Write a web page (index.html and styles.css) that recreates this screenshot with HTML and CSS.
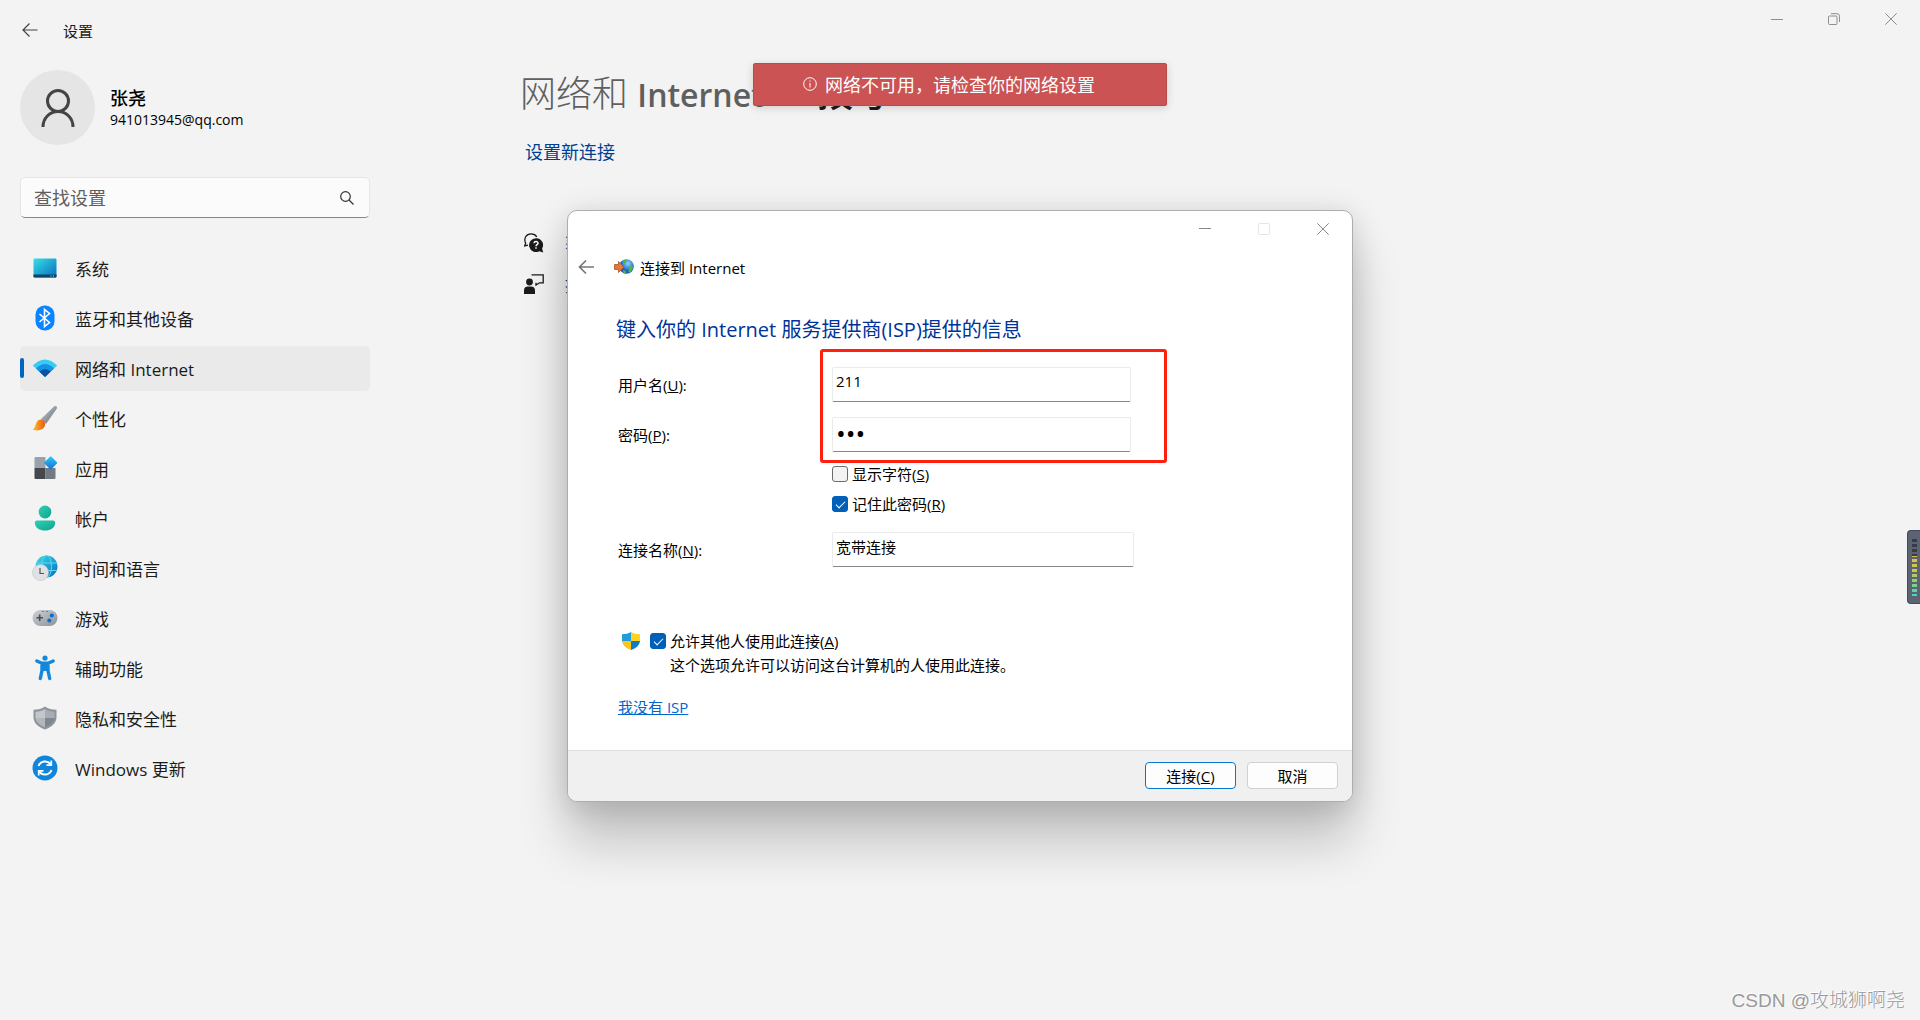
FILE: index.html
```
<!DOCTYPE html>
<html lang="zh-CN">
  <head>
    <meta charset="UTF-8" />
    <meta name="viewport" content="width=device-width, initial-scale=1.0" />
    <title>设置</title>
    <link rel="stylesheet" href="styles.css">
  </head>
  <body>
    <header class="topbar">
      <button class="icon-btn back" aria-label="返回">
        <svg width="16" height="16" viewBox="0 0 16 16" fill="none" stroke="#444" stroke-width="1.2"><path d="M15.5 8H1M7.500 1.500L1 8l6.500 6.500"/></svg>
      </button>
      <span class="app-name">设置</span>
      <div class="window-btns">
        <button class="icon-btn" aria-label="最小化">
          <svg width="12" height="12" viewBox="0 0 12 12" stroke="#8e8e8e"><path d="M0 6.500h12"/></svg>
        </button>
        <button class="icon-btn" aria-label="还原">
          <svg width="12" height="12" viewBox="0 0 12 12" fill="none" stroke="#8e8e8e"><rect x=".5" y="3" width="8.500" height="8.500" rx="1"/><path d="M3 .7h6a2.500 2.500 0 0 1 2.500 2.500V9"/></svg>
        </button>
        <button class="icon-btn" aria-label="关闭">
          <svg width="12" height="12" viewBox="0 0 12 12" stroke="#8e8e8e"><path d="M.3.3l11.400 11.400M11.700.3L.3 11.700"/></svg>
        </button>
      </div>
    </header>

    <div class="layout">
      <aside class="sidebar">
        <div class="profile">
          <div class="avatar">
            <svg width="36" height="40" viewBox="0 0 36 40" fill="none" stroke="#444" stroke-width="3"><circle cx="18" cy="13" r="10.500"/><path d="M3 39c0-8.500 6.500-15.500 15-15.500S33 30.500 33 39"/></svg>
          </div>
          <div>
            <div class="user-name">张尧</div>
            <div class="user-mail">941013945@qq.com</div>
          </div>
        </div>

        <div class="search">
          <input type="text" placeholder="查找设置" aria-label="查找设置" />
          <svg width="14" height="14" viewBox="0 0 14 14" fill="none" stroke="#333" stroke-width="1.200"><circle cx="5.500" cy="5.500" r="4.800"/><path d="M9 9l4.500 4.500"/></svg>
        </div>

        <nav class="menu">
          <a href="#">
            <svg width="26" height="26" viewBox="0 0 26 26">
              <defs><linearGradient id="sys" x2="1" y2="1"><stop stop-color="#36dfe6"/><stop offset="1" stop-color="#0a6cc0"/></linearGradient></defs>
              <rect x="1.500" y="3.500" width="23" height="19" rx="1.200" fill="url(#sys)"/><path d="M1.500 19.500h23v2a1 1 0 0 1-1 1h-21a1 1 0 0 1-1-1z" fill="#0b4468"/><path d="M18.500 21h1M21 21h1" stroke="#cde"/>
            </svg>
            系统
          </a>
          <a href="#">
            <svg width="26" height="26" viewBox="0 0 26 26"><rect x="3.500" y=".5" width="19" height="25" rx="9" fill="#0a84ff"/><path d="M7.500 9l10 8.500-5 4v-17l5 4-10 8.500" fill="none" stroke="#fff" stroke-width="1.600"/></svg>
            蓝牙和其他设备
          </a>
          <a href="#" class="active">
            <svg width="26" height="26" viewBox="0 0 26 26"><path d="M.8 10.500Q13-1.500 25.200 10.500L13 22z" fill="#38cbf5"/><path d="M4 13.500Q13 4.500 22 13.500L13 22z" fill="#1593e2"/><path d="M7.300 16.600Q13 11.500 18.700 16.600L13 22z" fill="#0a52a0"/></svg>
            网络和 Internet
          </a>
          <a href="#">
            <svg width="26" height="26" viewBox="0 0 26 26">
              <defs><linearGradient id="han" x2="1" y2="1"><stop stop-color="#c3c9cf"/><stop offset="1" stop-color="#646c76"/></linearGradient><linearGradient id="tip" x2="1"><stop stop-color="#fdc31b"/><stop offset="1" stop-color="#e8591d"/></linearGradient></defs>
              <path d="M9 14L22 1.500c1.500-1.300 3.800.3 2.700 2.300L14 19z" fill="url(#han)"/><path d="M4.500 17.500c1.700-3.600 5.500-3.800 7.500-1.500 2 2.200 1.300 6.500-2 8.300-3 1.600-7 1.300-9.300.2 2.300-1.300 2.500-4 3.800-7z" fill="url(#tip)"/>
            </svg>
            个性化
          </a>
          <a href="#">
            <svg width="26" height="26" viewBox="0 0 26 26">
              <defs><linearGradient id="app" x2="1" y2="1"><stop stop-color="#37c8f5"/><stop offset="1" stop-color="#0f6fd6"/></linearGradient></defs>
              <path d="M3.500 2H13.500v11H2.500V3a1 1 0 0 1 1-1z" fill="#9aa2ab"/><path d="M2.500 13h11v11h-10a1 1 0 0 1-1-1z" fill="#44474b"/><path d="M13.500 13h10v10a1 1 0 0 1-1 1h-9z" fill="#727983"/><rect x="13.800" y="3" width="9.800" height="9.800" rx="1" fill="url(#app)" transform="rotate(45 18.700 7.900)"/>
            </svg>
            应用
          </a>
          <a href="#">
            <svg width="26" height="26" viewBox="0 0 26 26">
              <defs><linearGradient id="acc" x2="1" y2="1"><stop stop-color="#2bd3b6"/><stop offset="1" stop-color="#12a18d"/></linearGradient></defs>
              <circle cx="13" cy="7" r="6.400" fill="url(#acc)"/><path d="M5 15.500h16a2.200 2.200 0 0 1 2.200 2.200c0 5-5 7.800-10.200 7.800S2.800 22.700 2.800 17.700A2.200 2.200 0 0 1 5 15.500z" fill="url(#acc)"/>
            </svg>
            帐户
          </a>
          <a href="#">
            <svg width="26" height="26" viewBox="0 0 26 26">
              <circle cx="14.500" cy="11.500" r="11" fill="url(#sys)"/><g fill="none" stroke="#5fd8ee" stroke-width="1"><ellipse cx="14.500" cy="11.500" rx="5" ry="11"/><path d="M4 8h21M4 15.500h21"/></g><circle cx="8.500" cy="17.500" r="8" fill="#dfe1e4" stroke="#c0c4c8" stroke-width=".6"/><path d="M8 13v5.500h4" fill="none" stroke="#555" stroke-width="1.200"/>
            </svg>
            时间和语言
          </a>
          <a href="#">
            <svg width="26" height="26" viewBox="0 0 26 26">
              <defs><linearGradient id="pad" x2="1" y2="1"><stop stop-color="#ced3d7"/><stop offset="1" stop-color="#8a9199"/></linearGradient></defs>
              <rect x=".5" y="5" width="25" height="16" rx="8" fill="url(#pad)"/><path d="M4.500 12.800h6.500M7.700 9.500v6.500" stroke="#4a4e53" stroke-width="1.600"/><circle cx="19.800" cy="10.500" r="2" fill="#0d6ccd"/><circle cx="17.300" cy="15.500" r="2" fill="#0d6ccd"/><path d="M10.500 6.500h1M14.500 6.500h1" stroke="#444"/>
            </svg>
            游戏
          </a>
          <a href="#">
            <svg width="26" height="26" viewBox="0 0 26 26" stroke="#1188dc" stroke-linecap="round" stroke-linejoin="round"><circle cx="13" cy="3" r="2.600" fill="#1188dc" stroke="none"/><path d="M4.800 6l5.200 2.300h6L21.200 6M10 9v6.500L8.300 23.500M16 9v6.500l1.700 8" fill="none" stroke-width="3.400"/><path d="M11 9h4v6h-4z" fill="#1188dc" stroke-width="2"/></svg>
            辅助功能
          </a>
          <a href="#">
            <svg width="26" height="26" viewBox="0 0 26 26">
              <path d="M13 1.500c3 2.200 7 3.200 11.500 3.200V12c0 6-4.500 9.800-11.500 12.500C6 21.800 1.500 18 1.500 12V4.700C6 4.700 10 3.700 13 1.500z" fill="#8e949b"/><path d="M13 4c-2.500 1.800-6 2.700-9.500 2.900V13H13z" fill="#c3c7cb"/><path d="M13 4c2.500 1.800 6 2.700 9.500 2.900V13H13z" fill="#a8adb3"/><path d="M3.500 13H13v9.300C7.500 20 4 17 3.500 13z" fill="#b2b7bc"/><path d="M22.500 13H13v9.300c5.500-2.300 9-5.300 9.500-9.300z" fill="#80868e"/>
            </svg>
            隐私和安全性
          </a>
          <a href="#">
            <svg width="26" height="26" viewBox="0 0 26 26"><circle cx="13" cy="13" r="12.500" fill="#0f86dc"/><g fill="none" stroke="#fff" stroke-width="2"><path d="M6.500 11A7 7 0 0 1 18.500 9M19.500 15A7 7 0 0 1 7.500 17"/><path d="M19.300 5.500v4.700h-4.800M6.700 20.500v-4.700h4.800" stroke-width="1.700"/></g></svg>
            Windows 更新
          </a>
        </nav>
      </aside>

      <main class="content">
        <h1 class="crumbs"><span class="crumb-parent">网络和 <b>Internet</b></span><span class="crumb-sep">›</span><span class="crumb-current">拨号</span></h1>
        <a href="#" class="new-link">设置新连接</a>
        <div class="help-row">
          <svg width="20" height="20" viewBox="0 0 20 20" fill="none" stroke="#1b1b1b"><path d="M1.800 10.500C-.8 5.500 2.300.8 7 .8c2.600 0 4.600 1.100 5.800 3M1.800 10L.6 13l3.400-.8" stroke-width="1.300"/><path d="M12 5.200a6.900 6.900 0 1 0 3.200 13l4 1.300-1.100-3.900A6.900 6.900 0 0 0 12 5.200z" fill="#1b1b1b" stroke="none"/><path d="M10 10.200c.2-2.400 4.200-2.200 4 .2-.1 1.300-2 1.300-2 2.800M12 14.300v1.500" stroke="#fff" stroke-width="1.400"/></svg>
          <a href="#">获取帮助</a>
        </div>
        <div class="help-row">
          <svg width="20" height="20" viewBox="0 0 20 20"><path d="M7.500.8h11.700v8h-3.700L12 11V8.800" fill="none" stroke="#1b1b1b" stroke-width="1.300"/><circle cx="5.500" cy="8" r="3.400" fill="#1b1b1b"/><path d="M0 20v-3.500A4 4 0 0 1 4 12.500h3a4 4 0 0 1 4 4V20z" fill="#1b1b1b"/></svg>
          <a href="#">提供反馈</a>
        </div>
      </main>
    </div>

    <div class="toast" role="alert">
      <svg width="14" height="14" viewBox="0 0 14 14" fill="none" stroke="#fff" stroke-width="1"><circle cx="7" cy="7" r="6.300"/><path d="M7 6v4.500M7 3.500v1.200"/></svg>
      网络不可用，请检查你的网络设置
    </div>

    <div class="dialog" role="dialog" aria-label="连接到 Internet">
      <div class="dialog-btns">
        <button class="icon-btn" aria-label="最小化">
          <svg width="12" height="12" viewBox="0 0 12 12" stroke="#8a8a8a"><path d="M0 5.500h12"/></svg>
        </button>
        <button class="icon-btn" aria-label="最大化" disabled>
          <svg width="12" height="12" viewBox="0 0 12 12" fill="none" stroke="#e4e4e4"><rect x=".5" y=".5" width="11" height="11" rx="1"/></svg>
        </button>
        <button class="icon-btn" aria-label="关闭">
          <svg width="12" height="12" viewBox="0 0 12 12" stroke="#8a8a8a"><path d="M.3.3l11.400 11.400M11.700.3L.3 11.700"/></svg>
        </button>
      </div>
      <div class="dialog-title">
        <button class="icon-btn" aria-label="上一步">
          <svg width="16" height="16" viewBox="0 0 16 16" fill="none" stroke="#777" stroke-width="1.700"><path d="M16 8H1.500M8 1.500L1.500 8 8 14.500"/></svg>
        </button>
        <svg class="globe" width="20" height="16" viewBox="0 0 20 16">
          <defs><radialGradient id="glo" cx=".6" cy=".3"><stop stop-color="#8fd4fb"/><stop offset="1" stop-color="#1a5fc0"/></radialGradient></defs>
          <circle cx="12.500" cy="7.500" r="7.300" fill="url(#glo)"/><path d="M9 1.500c1.500-1 3-.8 3.500 0l-1 2.500-2.500.8zM15 8l3-1.500 1 2.500-3 5-1.500-1 .3-3zM9 11l3 1-.5 3-2-.5z" fill="#4fb83f"/><path d="M.5 5.500h4v-3l5.500 5.500-5.500 5.500v-3h-4z" fill="#e07a3c" stroke="#b8501d" stroke-width=".8"/>
        </svg>
        <span>连接到 Internet</span>
      </div>

      <form class="form">
        <h2>键入你的 Internet 服务提供商(ISP)提供的信息</h2>
        <div class="credentials">
          <div class="field">
            <label for="user">用户名(<u>U</u>):</label>
            <input type="text" id="user" value="211" />
          </div>
          <div class="field">
            <label for="pass">密码(<u>P</u>):</label>
            <input type="password" id="pass" value="211" />
          </div>
          <div class="highlight"></div>
        </div>
        <div class="checks">
          <label class="check"><input type="checkbox" /><span>显示字符(<u>S</u>)</span></label>
          <label class="check"><input type="checkbox" checked /><span>记住此密码(<u>R</u>)</span></label>
        </div>
        <div class="field wide">
          <label for="conn">连接名称(<u>N</u>):</label>
          <input type="text" id="conn" value="宽带连接" />
        </div>
        <div class="share">
          <svg width="18" height="18" viewBox="0 0 18 18"><path d="M9 0C6.500 1.500 3.500 2.200 0 2.200V9h9z" fill="#1f9be0"/><path d="M9 0c2.500 1.500 5.500 2.200 9 2.200V9H9z" fill="#ffd21c"/><path d="M0 9h9v9C4 16 .5 13.500 0 9z" fill="#fdc51a"/><path d="M18 9H9v9c5-2 8.500-4.500 9-9z" fill="#1279c4"/></svg>
          <label class="check"><input type="checkbox" checked /><span>允许其他人使用此连接(<u>A</u>)</span></label>
        </div>
        <p class="hint">这个选项允许可以访问这台计算机的人使用此连接。</p>
        <a href="#" class="no-isp">我没有 ISP</a>
      </form>

      <div class="dialog-footer">
        <button class="btn primary">连接(<u>C</u>)</button>
        <button class="btn">取消</button>
      </div>
    </div>

    <div class="meter"></div>
    <div class="watermark">CSDN @攻城狮啊尧</div>
  </body>
</html>
```
FILE: styles.css
```
* {
  box-sizing: border-box;
}
body {
  margin: 0;
  min-height: 100vh;
  position: relative;
  overflow: hidden;
  background-color: #f3f3f3;
  color: #1b1b1b;
  font-family: "Open Sans", "Noto Sans CJK SC", sans-serif;
  font-size: 18px;
}
a {
  color: #003e92;
  text-decoration: none;
}
input,
button {
  font-family: inherit;
  color: inherit;
}
svg {
  display: block;
  flex: none;
}
.icon-btn {
  display: flex;
  align-items: center;
  justify-content: center;
  border: none;
  padding: 0;
  background: none;
}

/* window bar */
.topbar {
  display: flex;
  height: 60px;
  padding: 0 1px 0 22px;
  align-items: center;
}
.app-name {
  margin-left: 25px;
  font-size: 15px;
}
.window-btns {
  display: flex;
  align-self: flex-start;
  margin-left: auto;
}
.window-btns .icon-btn {
  width: 57px;
  height: 38px;
}

.layout {
  display: flex;
}

/* sidebar */
.sidebar {
  width: 350px;
  margin-left: 20px;
  padding-top: 10px;
}
.profile {
  display: flex;
  align-items: center;
  gap: 15px;
  color: #000;
}
.avatar {
  display: flex;
  align-items: center;
  justify-content: center;
  width: 75px;
  height: 75px;
  border-radius: 50%;
  background-color: #e5e5e5;
}
.user-name {
  font-weight: 500;
  line-height: 24px;
}
.user-mail {
  font-size: 14px;
  line-height: 20px;
}
.search {
  display: flex;
  align-items: center;
  height: 41px;
  margin: 32px 0 28px;
  padding: 0 15px 0 13px;
  border: 1px solid #e5e5e5;
  border-bottom-color: #868686;
  border-radius: 5px;
  background-color: #fbfbfb;
}
.search input {
  flex: 1;
  min-width: 0;
  border: none;
  padding: 0;
  outline: none;
  background: none;
  font-size: 18px;
}
.search input::placeholder {
  color: #5f5f5f;
}
.menu {
  display: flex;
  flex-direction: column;
  gap: 5px;
  font-size: 17px;
}
.menu a {
  display: flex;
  align-items: center;
  gap: 17px;
  height: 45px;
  padding: 0 0 1px 12px;
  border-radius: 5px;
  color: #1b1b1b;
}
.menu .active {
  position: relative;
  background-color: #eaeaea;
}
.menu .active::before {
  content: "";
  position: absolute;
  left: 0;
  width: 4px;
  height: 20px;
  border-radius: 2px;
  background-color: #0067c0;
}

/* page behind the dialog */
.content {
  flex: 1;
  padding: 10px 20px 0 150px;
}
.crumbs {
  display: flex;
  margin: 0;
  font-size: 36px;
  font-weight: 300;
  line-height: 48px;
}
.crumb-parent {
  color: #5f5f5f;
}
.crumb-parent b {
  font-weight: 600;
  font-size: 32px;
}
.crumb-sep {
  margin: 0 22px;
}
.crumb-current {
  font-weight: 500;
}
.new-link {
  display: block;
  margin: 18px 0 62px 5px;
  line-height: 30px;
}
.help-row {
  display: flex;
  align-items: center;
  gap: 21px;
  height: 28px;
  margin: 0 0 13px 4px;
}

.toast {
  position: absolute;
  top: 63px;
  left: 50%;
  transform: translateX(-50%);
  display: flex;
  align-items: center;
  justify-content: center;
  gap: 8px;
  width: 414px;
  height: 43px;
  padding: 0 22px 2px 0;
  border: 1px solid #b94b4b;
  border-radius: 2px;
  background-color: #cb5353;
  color: #fff;
  box-shadow: 0 2px 8px rgba(0, 0, 0, 0.15);
}

/* dialog */
.dialog {
  position: absolute;
  top: 210px;
  left: 50%;
  transform: translateX(-50%);
  width: 786px;
  border: 1px solid #adadad;
  border-radius: 10px;
  overflow: hidden;
  background-color: #fff;
  color: #000;
  font-size: 15px;
  box-shadow: 0 40px 50px rgba(0, 0, 0, 0.2), 0 4px 30px rgba(0, 0, 0, 0.15);
}
.dialog-btns {
  display: flex;
  justify-content: flex-end;
}
.dialog-btns .icon-btn {
  width: 59px;
  height: 36px;
}
.dialog-title {
  display: flex;
  align-items: center;
  height: 40px;
  padding-left: 10px;
}
.dialog-title .globe {
  margin: 0 6px 0 20px;
}
.form {
  padding: 28px 20px 32px 50px;
}
.form h2 {
  margin: 0 0 22px -2px;
  color: #003399;
  font-size: 20px;
  font-weight: 400;
  line-height: 30px;
}
.credentials {
  position: relative;
  display: flex;
  flex-direction: column;
  gap: 15px;
}
.field {
  display: flex;
  align-items: center;
}
.field label {
  width: 214px;
}
.field input {
  width: 299px;
  height: 35px;
  padding: 0 3px 7px;
  border: 1px solid #ebebeb;
  border-bottom-color: #868686;
  border-radius: 2px;
  outline: none;
  background-color: #fff;
  font-size: 15px;
}
.field input[type="password"] {
  padding-bottom: 4px;
  font-size: 26px;
}
.wide input {
  width: 302px;
}
.highlight {
  position: absolute;
  top: -18px;
  left: 202px;
  width: 347px;
  height: 114px;
  border: 3px solid #ff2010;
  border-radius: 3px;
  pointer-events: none;
}
.checks {
  display: flex;
  flex-direction: column;
  gap: 8px;
  margin: 11px 0 17px 214px;
}
.check {
  display: flex;
  align-items: center;
  gap: 4px;
  line-height: 22px;
}
.check input {
  appearance: none;
  display: flex;
  justify-content: center;
  width: 16px;
  height: 16px;
  margin: 0;
  border: 1px solid #6b6b6b;
  border-radius: 3px;
  background-color: #f3f3f3;
}
.check input:checked {
  border-color: #005fb8;
  background-color: #005fb8;
}
.check input:checked::after {
  content: "";
  width: 4px;
  height: 8px;
  margin-top: 2px;
  border: solid #fff;
  border-width: 0 1px 1px 0;
  transform: rotate(45deg);
}
.share {
  display: flex;
  align-items: center;
  gap: 10px;
  margin: 63px 0 0 4px;
}
.hint {
  margin: 2px 0 20px 52px;
  line-height: 22px;
}
.no-isp {
  color: #0066cc;
  line-height: 22px;
  text-decoration: underline;
}
.dialog-footer {
  display: flex;
  justify-content: flex-end;
  gap: 11px;
  padding: 11px 14px 12px;
  border-top: 1px solid #dfdfdf;
  background-color: #f0f0f0;
}
.btn {
  width: 91px;
  height: 27px;
  padding: 0;
  border: 1px solid #d0d0d0;
  border-radius: 4px;
  background-color: #fdfdfd;
  font-size: 15px;
  line-height: 24px;
}
.btn.primary {
  border-color: #0078d4;
}

/* volume meter on the right edge */
.meter {
  position: absolute;
  top: 530px;
  right: 0;
  width: 13px;
  height: 74px;
  border: 1px solid #444b58;
  border-right: none;
  border-radius: 4px 0 0 4px;
  background-color: #5c6474;
}
.meter::before {
  content: "";
  position: absolute;
  top: 8px;
  left: 4px;
  width: 5px;
  height: 57px;
  background: repeating-linear-gradient(transparent 0 3px, #5c6474 3px 5px),
    linear-gradient(#353b48 0 17px, #e0bd4a 17px, #c8c858 32px, #7fd08a 46px, #3fd6c4);
}
.watermark {
  position: absolute;
  right: 15px;
  bottom: 4px;
  color: #999;
  font-family: "Liberation Sans", "Noto Sans CJK SC", sans-serif;
  font-size: 19px;
  font-weight: 300;
  line-height: 30px;
  text-shadow: -1px -1px 0 #fff;
}
```
